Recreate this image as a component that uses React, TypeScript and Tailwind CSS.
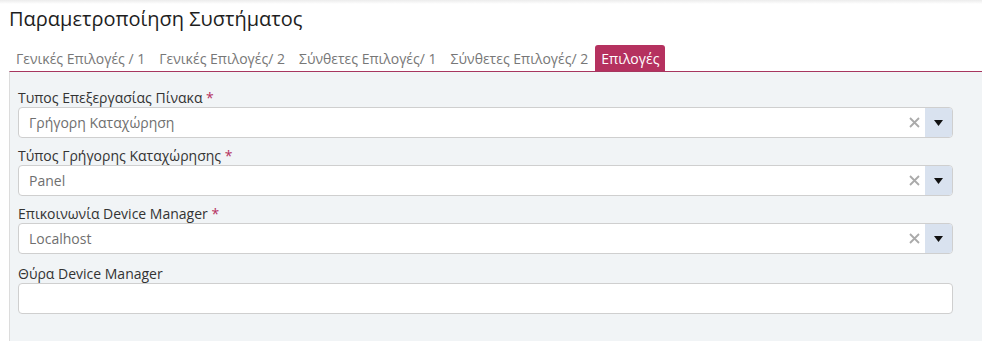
import React from 'react';

const tabs = [
  { label: 'Γενικές Επιλογές / 1', active: false },
  { label: 'Γενικές Επιλογές/ 2', active: false },
  { label: 'Σύνθετες Επιλογές/ 1', active: false },
  { label: 'Σύνθετες Επιλογές/ 2', active: false },
  { label: 'Επιλογές', active: true },
];

const fields = [
  { label: 'Τυπος Επεξεργασίας Πίνακα', required: true, value: 'Γρήγορη Καταχώρηση', select: true },
  { label: 'Τύπος Γρήγορης Καταχώρησης', required: true, value: 'Panel', select: true },
  { label: 'Επικοινωνία Device Manager', required: true, value: 'Localhost', select: true },
  { label: 'Θύρα Device Manager', required: false, value: '', select: false },
];

const SelectBox = ({ value }: { value: string }) => (
  <div className="flex h-[31px] w-full rounded-[4px] border border-[#cfcfcf] bg-white overflow-hidden">
    <div className="flex-1 flex items-center pl-[10px] text-[14px] text-[#6f6f6f]">{value}</div>
    <div className="flex items-center pr-[5px]">
      <svg width="11" height="11" viewBox="0 0 11 11">
        <path d="M1 1 L10 10 M10 1 L1 10" stroke="#aaa" strokeWidth="1.8" />
      </svg>
    </div>
    <div className="w-[27px] bg-[#d9e2ef] flex items-center justify-center">
      <svg width="9" height="6" viewBox="0 0 9 6">
        <path d="M0 0 L9 0 L4.5 6 Z" fill="#111" />
      </svg>
    </div>
  </div>
);

const App = () => {
  return (
    <div className="w-[982px] h-[341px] overflow-hidden bg-white font-['Open_Sans',sans-serif] relative">
      <div className="absolute top-0 left-0 right-0 h-[4px] bg-gradient-to-b from-[#ececec] to-white" />
      <h1 className="pl-[9px] pt-[5px] text-[20px] leading-[28px] text-[#1e1e1e] font-normal relative">
        Παραμετροποίηση Συστήματος
      </h1>
      <div className="flex pl-[9px] mt-[12px] h-[26px]">
        {tabs.map((tab) => (
          <div
            key={tab.label}
            className={
              tab.active
                ? 'px-[6px] mr-[8px] flex items-center rounded-t-[3px] bg-[#b5315f] text-white text-[14px]'
                : 'px-[7px] flex items-center text-[14px] text-[#777]'
            }
          >
            {tab.label}
          </div>
        ))}
      </div>
      <div className="ml-[9px] border-t border-t-[#a7365f] border-l border-l-[#dcdcdc] bg-[#f1f4f6] pl-[8px] pr-[29px] pt-[16px] h-[300px]">
        {fields.map((field, i) => (
          <div key={field.label} className={i === 2 ? 'mb-[10px]' : 'mb-[8px]'}>
            <div className="text-[14px] leading-[19px] text-[#333]">
              {field.label}
              {field.required && <span className="text-[#b5315f]"> *</span>}
            </div>
            {field.select ? (
              <SelectBox value={field.value} />
            ) : (
              <div className="h-[31px] w-full rounded-[4px] border border-[#cfcfcf] bg-white" />
            )}
          </div>
        ))}
      </div>
    </div>
  );
};

export default App;
